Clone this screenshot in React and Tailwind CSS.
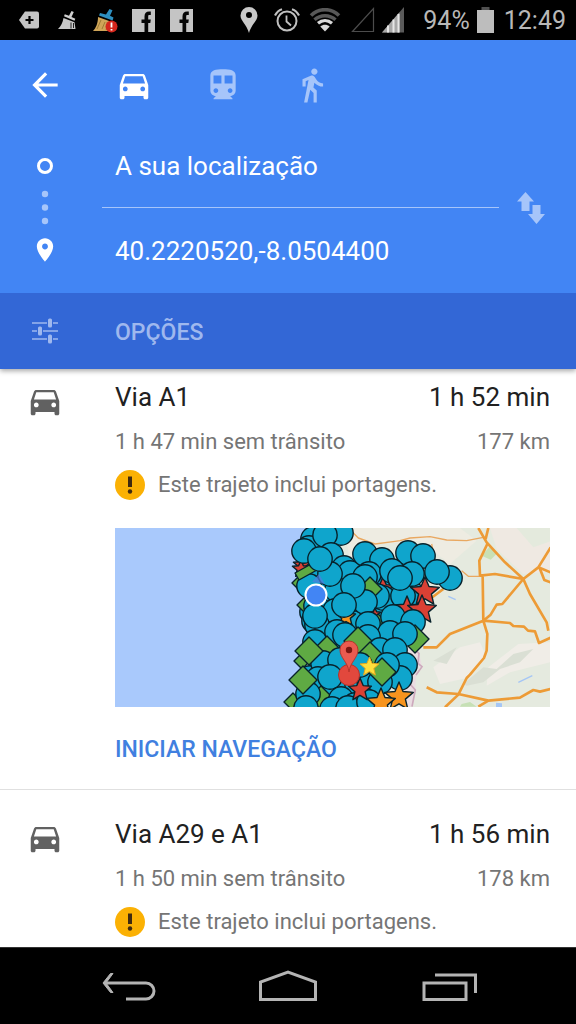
import React from "react";

const CAR =
  "M18.92 6.01C18.72 5.42 18.16 5 17.5 5h-11c-.66 0-1.21.42-1.42 1.01L3 12v8c0 .55.45 1 1 1h1c.55 0 1-.45 1-1v-1h12v1c0 .55.45 1 1 1h1c.55 0 1-.45 1-1v-8l-2.08-5.99zM6.5 16c-.83 0-1.5-.67-1.5-1.5S5.67 13 6.5 13s1.5.67 1.5 1.5S7.33 16 6.5 16zm11 0c-.83 0-1.5-.67-1.5-1.5s.67-1.5 1.5-1.5 1.5.67 1.5 1.5-.67 1.5-1.5 1.5zM5 11l1.5-4.5h11L19 11H5z";
const BACK = "M20 11H7.83l5.59-5.59L12 4l-8 8 8 8 1.41-1.41L7.83 13H20v-2z";
const TRAIN =
  "M12 2c-4.42 0-8 .5-8 4v9.5C4 17.43 5.57 19 7.5 19L6 20.5v.5h12v-.5L16.5 19c1.93 0 3.5-1.57 3.5-3.5V6c0-3.5-3.58-4-8-4zM7.5 17c-.83 0-1.5-.67-1.5-1.5S6.67 14 7.5 14s1.5.67 1.5 1.5S8.33 17 7.5 17zm3.5-6H6V6h5v5zm5.5 6c-.83 0-1.5-.67-1.5-1.5s.67-1.5 1.5-1.5 1.5.67 1.5 1.5-.67 1.5-1.5 1.5zm1.5-6h-5V6h5v5z";
const WALK =
  "M13.5 5.5c1.1 0 2-.9 2-2s-.9-2-2-2-2 .9-2 2 .9 2 2 2zM9.8 8.9L7 23h2.1l1.8-8 2.1 2v6h2v-7.5l-2.1-2 .6-3C14.8 12 16.8 13 19 13v-2c-1.9 0-3.5-1-4.3-2.4l-1-1.6c-.4-.6-1-1-1.7-1-.3 0-.5.1-.8.1L6 8.3V13h2V9.6l1.8-.7";
const PLACE =
  "M12 2C8.13 2 5 5.13 5 9c0 5.25 7 13 7 13s7-7.75 7-13c0-3.87-3.13-7-7-7zm0 9.5c-1.38 0-2.5-1.12-2.5-2.5s1.12-2.5 2.5-2.5 2.5 1.12 2.5 2.5-1.12 2.5-2.5 2.5z";

function Icon({ d, className = "size-[38px]" }) {
  return (
    <svg viewBox="0 0 24 24" className={className} fill="currentColor" aria-hidden="true">
      <path d={d} />
    </svg>
  );
}

function Cell({ children }) {
  return <span className="flex w-[38px] shrink-0 justify-center">{children}</span>;
}

function FacebookIcon() {
  return (
    <svg viewBox="0 0 23 23" className="size-[23px]" aria-hidden="true">
      <rect width="23" height="23" fill="#c4c4c4" />
      <path d="M12.500 23v-9H9.500v-3.600h3V7.600c0-3.300 1.700-5 4.600-5h1.700v3.500h-1.300c-1 0-1.300.4-1.300 1.400v2.900h2.600l-.5 3.600h-2.100v9z" fill="#050505" />
    </svg>
  );
}

function StatusBar() {
  return (
    <div className="flex h-10 items-center justify-between bg-black pl-[10px] pr-[10px] text-[#b8b8b8]">
      <div className="flex items-center">
        <Cell>
          <svg viewBox="0 0 20 18" className="h-[18px] w-5" aria-hidden="true">
            <path d="M6 .5h12a2 2 0 0 1 2 2v13a2 2 0 0 1-2 2H6L0 9z" fill="#c4c4c4" />
            <path d="M10.500 5v8M6.500 9h8" stroke="#000" strokeWidth="2.200" />
          </svg>
        </Cell>
        <Cell>
          <svg viewBox="0 0 20 20" className="size-5" aria-hidden="true">
            <path d="M14.500 1l2.300 1-2.300 5 3.800 1.800-.8 2L7 6.300l.8-2 4.200 1.500z" fill="#d0d0d0" />
            <path d="M6.500 8l11 4.300 1 6.700H1c3-3 4.500-6 5.500-11z" fill="#c8c8c8" />
            <path d="M14 12.500v6M16.500 13v5" stroke="#222" strokeWidth="1" />
          </svg>
        </Cell>
        <Cell>
          <svg viewBox="0 0 26 25" className="h-[25px] w-[26px]" aria-hidden="true">
            <path d="M6 9l14 5-1 9H1c3-3 5-8 5-14z" fill="#cfa558" />
            <path d="M9 12L5 21M13 14l-3 7M17 15l-3 7" stroke="#9d7a35" />
            <path d="M17.500 1l3 1.300-2.500 5.500 3.500 1.700-.9 3L7 7.500l1-2.500 6 1.500z" fill="#2d8fc0" />
            <circle cx="19.500" cy="18.500" r="6" fill="#d5261c" />
            <path d="M19.500 14.500v5M19.500 21v1.500" stroke="#fff" strokeWidth="1.800" />
          </svg>
        </Cell>
        <Cell>
          <FacebookIcon />
        </Cell>
        <Cell>
          <FacebookIcon />
        </Cell>
      </div>
      <div className="flex items-center">
        <Cell>
          <svg viewBox="0 0 18 26" className="h-[26px] w-[18px]" aria-hidden="true">
            <path fillRule="evenodd" d="M9 0a8.500 8.500 0 0 0-8.500 8.500C.5 14 6.500 17 9 26c2.500-9 8.500-12 8.500-17.500A8.500 8.500 0 0 0 9 0zm0 5a3 3 0 1 1 0 6 3 3 0 0 1 0-6z" fill="#c8c8c8" />
          </svg>
        </Cell>
        <Cell>
          <svg viewBox="0 0 26 24" className="h-6 w-[26px]" fill="none" stroke="#c0c0c0" aria-hidden="true">
            <circle cx="13" cy="13" r="9.500" strokeWidth="2" />
            <path d="M12.500 7.500v6l4.500 4" strokeWidth="1.800" />
            <path d="M1 7.500C2.500 4.500 4.500 2.300 8 1.200M25 7.500C23.500 4.500 21.500 2.300 18 1.200" strokeWidth="2.200" />
          </svg>
        </Cell>
        <Cell>
          <svg viewBox="0 0 32 24" className="h-6 w-8" fill="none" aria-hidden="true">
            <path d="M2 7.500C10-.3 22-.3 30 7.500" stroke="#585858" strokeWidth="3.600" />
            <path d="M5.500 11.800c6-5.500 15-5.500 21 0" stroke="#585858" strokeWidth="3.400" />
            <path d="M9 15.300c4.200-3.600 9.800-3.600 14 0" stroke="#d8d8d8" strokeWidth="3.200" />
            <path d="M16 23.500l-4.700-5c2.800-2.200 6.600-2.200 9.400 0z" fill="#d8d8d8" />
          </svg>
        </Cell>
        <Cell>
          <svg viewBox="0 0 24 26" className="h-[26px] w-6" fill="none" aria-hidden="true">
            <path d="M22.500 1.500v23H1.500z" stroke="#4c4c4c" strokeWidth="1.200" />
          </svg>
        </Cell>
        <svg viewBox="0 0 23 26" className="h-[26px] w-[23px]" aria-hidden="true">
          <path d="M22 0v25.500H0z" fill="#5a5a5a" />
          <path d="M17.500 5.200v20.300H0z" fill="#a8a8a8" />
          <path d="M6 18.500v7M11.500 12.500v13M16.500 7v18.500" stroke="#e6e6e6" strokeWidth="2" />
        </svg>
        <span className="ml-[18px] pt-[2px] text-[25px] leading-[30px]">94%</span>
        <svg viewBox="0 0 17 26" className="ml-[7px] h-[26px] w-[17px]" aria-hidden="true">
          <path d="M4.500 0h8v3h-8z" fill="#505050" />
          <path d="M0 3h17v23H0z" fill="#bdbdbd" />
        </svg>
        <span className="ml-[10px] pt-[2px] text-[25px] leading-[30px]">12:49</span>
      </div>
    </div>
  );
}

/* Markers are listed in painting order: [kind, x, y, radius]. */
const MARKERS = [
  ["c", 199, 40], ["c", 198, 50], ["c", 197, 84], ["c", 205, 60], ["c", 213, 72], ["c", 212, 93], ["c", 215, 105],
  ["c", 240, 85], ["c", 238, 95], ["c", 262, 52], ["c", 270, 60], ["c", 275, 75], ["c", 262, 85], ["c", 215, 118],
  ["c", 205, 128], ["c", 235, 125], ["c", 260, 118], ["c", 256, 130], ["c", 230, 140], ["c", 243, 150], ["c", 270, 125],
  ["c", 195, 150], ["c", 205, 165], ["c", 200, 177], ["c", 245, 170], ["c", 208, 180], ["c", 255, 152], ["c", 232, 162],
  ["r", 187, 37, 9], ["g", 187, 55, 10], ["r", 186, 41, 9], ["g", 219, 38, 10], ["g", 189, 77, 7], ["o", 214, 86, 10],
  ["c", 226, 5], ["c", 198, 11], ["c", 194, 20], ["c", 189, 23], ["c", 210, 7], ["c", 216, 27],
  ["c", 229, 40], ["c", 235, 45], ["c", 222, 62], ["c", 194, 58], ["c", 215, 46], ["b", 191, 43], ["c", 205, 31],
  ["c", 250, 26], ["c", 267, 32], ["c", 302, 30], ["c", 293, 25], ["c", 308, 28],
  ["c", 254, 46], ["c", 250, 49], ["r", 268, 61, 12], ["c", 268, 70], ["c", 262, 68], ["g", 255, 61, 12],
  ["c", 297, 66], ["c", 288, 68], ["c", 277, 43], ["c", 297, 46], ["c", 285, 50],
  ["c", 335, 50], ["c", 322, 44], ["r", 292, 81, 13], ["r", 310, 64, 15], ["r", 307, 82, 15],
  ["c", 199, 93], ["c", 201, 78], ["c", 220, 83], ["c", 250, 74], ["c", 238, 58], ["o", 231, 89, 10],
  ["c", 229, 77], ["r", 260, 86, 6], ["g", 263, 93, 7], ["c", 253, 96], ["c", 202, 97], ["c", 200, 88],
  ["c", 200, 114], ["c", 222, 104], ["c", 230, 107],
  ["c", 278, 89], ["c", 298, 94], ["c", 275, 105], ["g", 300, 111, 14], ["c", 290, 106],
  ["c", 253, 109], ["c", 265, 122], ["c", 280, 122], ["o", 213, 132, 8], ["g", 212, 121, 13],
  ["c", 208, 135], ["c", 225, 132], ["g", 243, 113, 14], ["g", 255, 127, 13], ["c", 245, 137], ["c", 290, 137], ["c", 285, 150], ["c", 272, 137],
  ["c", 203, 151], ["c", 218, 160], ["c", 215, 149],
  ["g", 187, 133, 8], ["g", 194, 123, 14], ["g", 178, 174, 9], ["g", 206, 170, 12],
  ["c", 193, 166], ["g", 188, 152, 14], ["c", 191, 180], ["c", 226, 171], ["c", 217, 181], ["c", 240, 177], ["c", 233, 180],
  ["c", 265, 154], ["c", 254, 174], ["g", 267, 144, 14], ["r", 245, 162, 12], ["o", 284, 169, 15], ["o", 266, 175, 15],
];

const MARKER_FILL = { r: "#da4034", o: "#f7941e", g: "#5faa43" };

function starPoints(x, y, radius) {
  return Array.from({ length: 10 }, (_, i) => {
    const r = i % 2 ? radius * 0.45 : radius;
    const a = (i * Math.PI) / 5 - Math.PI / 2;
    return `${(x + r * Math.cos(a)).toFixed(1)},${(y + r * Math.sin(a)).toFixed(1)}`;
  }).join(" ");
}

function Marker({ kind, x, y, r }) {
  if (kind === "c") return <circle cx={x} cy={y} r="12.200" fill="#0fa5cc" />;
  if (kind === "b")
    return <path d={`M${x - 11} ${y + 2}L${x + 7} ${y - 8}L${x + 11} ${y - 1}L${x - 7} ${y + 9}z`} fill={MARKER_FILL.g} />;
  if (kind === "g")
    return <path d={`M${x} ${y - r}L${x + r} ${y}L${x} ${y + r}L${x - r} ${y}z`} fill={MARKER_FILL.g} />;
  return <polygon points={starPoints(x, y, r)} fill={MARKER_FILL[kind]} />;
}

function RouteMap() {
  return (
    <svg viewBox="0 0 435 179" className="block w-full" role="img" aria-label="Mapa do trajeto">
      <rect width="435" height="179" fill="#a9c9fc" />
      <path d="M205 0h230v179H185l10-60-5-60z" fill="#e5eadf" />
      <g transform="translate(285 -4) scale(.3333)">
        <path d="M-170 0L180 12 230 50 150 120 60 50-60 60-150 110z" fill="#eeece2" />
        <path d="M270 12h182v130L370 150 290 75z" fill="#efe9e2" />
        <path d="M350 12h102v40L400 70z" fill="#e4eadd" />
        <path d="M100 430l80-60 60-15 20 45-50 60-90 20zM265 430l90-70 95-5v60l-120 30-70 40z" fill="#f0ede7" />
        <path d="M190 480l60-50 40 5 50-45 60-15-40 40-60 20-50 40-50 10zM100 410l70-40-30 50z" fill="#dadfd4" />
        <path d="M245 95l25-28 20 22-18 18z" fill="#c9e0b4" />
        <path d="M185 540l25-6 20 14h-50z" fill="#c6e0b5" />
        <path d="M145 217l22 10M355 475l42-20" stroke="#a5c6f5" strokeWidth="4" />
        <path d="M288 536l18 2v12h-18z" fill="#a5c6f5" />
        <path d="M20 370l35 10 10 40-15 20 -5 60-10 48H0z" fill="#eadde2" />
        <path d="M35 370l22 18-3 30 12 10-18 25M30 480l16 18-10 50" fill="none" stroke="#cda9bd" strokeWidth="5" />
        <g fill="none" stroke="#e9a861" strokeWidth="4" strokeLinejoin="round">
          <path d="M-155 12l30 30 50 18 60-8L0 50l30-8 60-4 50 10 60 2 50-10M185 140l20 17h33M95 60l8 40" />
          <path d="M-190 12l-3 12" strokeWidth="7" />
        </g>
        <g fill="none" stroke="#ed9b36" strokeWidth="8" strokeLinejoin="round">
          <path d="M235 12l25 43 55 60 55 50 20 45 50 85 5 25M265 12l-8 33M262 60l-24 50 2 45 45-5 85 15M248 155l2 135M250 290l22-18 18-30 17-2 63-75 45-35 37-60M415 130l37 15M418 130l15 38 19 7" />
          <path d="M250 290l-100 40-40 40H70M250 290l80 7 10 9 32 2 12 12 21 2 12 35 35-16M250 290l12 40-2 50-8 22-42 50-10 10-25 50-40 38" />
          <path d="M80 490l30 15 65 5 90 20 95-9 40-23 20 5 32-8M265 530l-30 18M90 225l40-30" />
        </g>
      </g>
      <g stroke="#08222b" strokeWidth="1.400" strokeLinejoin="round">
        {MARKERS.map(([kind, x, y, r], i) => (
          <Marker key={i} kind={kind} x={x} y={y} r={r} />
        ))}
      </g>
      <path d="M197 54l7-8 6 10z" fill="#4f7fe0" opacity=".7" />
      <circle cx="201" cy="67" r="10.500" fill="#4285f4" stroke="#fff" strokeWidth="2" />
      <polygon points={starPoints(254.5, 139, 10)} fill="#ffdf3d" stroke="#e8a71c" strokeWidth="1" />
      <circle cx="234" cy="147" r="10.500" fill="#e2483d" stroke="#b93127" />
      <path d="M234 144c-1-10-9-14-9-22a9 9 0 0 1 18 0c0 8-8 12-9 22z" fill="#ea5b50" stroke="#b8352b" />
      <circle cx="234" cy="122" r="3.200" fill="#7c1712" />
    </svg>
  );
}

function Route({ className, name, time, detail, distance, children }) {
  return (
    <article className={`flex items-start pr-[26px] ${className}`}>
      <div className="ml-[26px] mr-[51px] mt-[2px] shrink-0 text-[#616161]">
        <Icon d={CAR} />
      </div>
      <div className="min-w-0 flex-1">
        <h2 className="flex justify-between text-[26px] leading-[34px] text-[#212121]">
          <span>{name}</span>
          <span>{time}</span>
        </h2>
        <p className="mt-[11px] flex justify-between text-[22px] leading-[34px] text-[#757575]">
          <span>{detail}</span>
          <span>{distance}</span>
        </p>
        <p className="mt-[9px] flex items-center gap-[13px] text-[22px] leading-[34px] text-[#757575]">
          <svg viewBox="0 0 30 30" className="size-[30px] shrink-0" aria-hidden="true">
            <circle cx="15" cy="15" r="15" fill="#fbb104" />
            <path d="M13 6.500h4V17h-4z" fill="#3f2a10" />
            <circle cx="15" cy="21.500" r="2.200" fill="#3f2a10" />
          </svg>
          <span>Este trajeto inclui portagens.</span>
        </p>
        {children}
      </div>
    </article>
  );
}

export default function App() {
  return (
    <div className="flex min-h-screen flex-col bg-white font-[Roboto,sans-serif]">
      <StatusBar />
      <header className="relative bg-[#4285f4] text-white shadow-[0_2px_5px_rgba(0,0,0,0.35)]">
        <nav className="flex gap-[51px] pb-[21px] pl-[26px] pt-[26px]">
          <button aria-label="Voltar"><Icon d={BACK} /></button>
          <button aria-label="Carro"><Icon d={CAR} /></button>
          <button aria-label="Transportes públicos" className="text-[#a6c5fa]"><Icon d={TRAIN} /></button>
          <button aria-label="A pé" className="text-[#a6c5fa]"><Icon d={WALK} /></button>
        </nav>
        <div className="flex">
          <div className="flex w-[90px] shrink-0 flex-col items-center pt-[33px]">
            <svg viewBox="0 0 16 16" className="size-4" aria-hidden="true">
              <circle cx="8" cy="8" r="6.500" fill="none" stroke="currentColor" strokeWidth="3" />
            </svg>
            <svg viewBox="0 0 8 36" className="mt-4 h-9 w-2" fill="#a6c5fa" aria-hidden="true">
              <circle cx="4" cy="4" r="3.200" />
              <circle cx="4" cy="17.500" r="3.200" />
              <circle cx="4" cy="31" r="3.200" />
            </svg>
            <Icon d={PLACE} className="mt-[10px] size-7" />
          </div>
          <div className="ml-3 flex-1">
            <input aria-label="Ponto de partida" defaultValue="A sua localização" className="block h-[83px] w-full border-b border-[#a6c5fa] bg-transparent px-[13px] text-[26px] outline-none" />
            <input aria-label="Destino" defaultValue="40.2220520,-8.0504400" className="block h-[85px] w-full bg-transparent px-[13px] text-[26px] outline-none" />
          </div>
          <button aria-label="Trocar partida e destino" className="flex w-[77px] items-center justify-center pb-[2px] pr-[13px]">
            <svg viewBox="0 0 28 32" className="h-8 w-7" fill="#a6c5fa" aria-hidden="true">
              <path d="M8.500 0l8.500 9.500h-4.500V19h-8V9.500H0zM15.500 13h8v9H28L19.500 32 11 22h4.500z" />
            </svg>
          </button>
        </div>
        <button className="flex h-[76px] w-full items-center bg-[#3367d6] text-left text-[23px] font-medium text-[#9fb8ee]">
          <span className="flex w-[90px] justify-center">
            <svg viewBox="0 0 26 26" className="size-[26px]" aria-hidden="true">
              <path d="M0 5h15M21 5h5M0 13h5M11 13h15M0 21h15M21 21h5" stroke="currentColor" strokeWidth="1.600" />
              <rect x="16" y=".5" width="4" height="9" rx="1.500" fill="currentColor" />
              <rect x="6" y="8.500" width="4" height="9" rx="1.500" fill="currentColor" />
              <rect x="16" y="16.500" width="4" height="9" rx="1.500" fill="currentColor" />
            </svg>
          </span>
          <span className="pl-[25px] pt-1">OPÇÕES</span>
        </button>
      </header>
      <main className="flex-1">
        <Route className="border-b border-[#e0e0e0] pb-[22px] pt-[11px]" name="Via A1" time="1 h 52 min" detail="1 h 47 min sem trânsito" distance="177 km">
          <div className="mt-[26px]">
            <RouteMap />
          </div>
          <button className="mt-[26px] block text-[23px] font-medium leading-[34px] text-[#4080e0]">INICIAR NAVEGAÇÃO</button>
        </Route>
        <Route className="pb-2 pt-[27px]" name="Via A29 e A1" time="1 h 56 min" detail="1 h 50 min sem trânsito" distance="178 km" />
      </main>
      <footer className="flex h-[77px] items-center justify-center gap-[100px] border-t border-[#333] bg-black text-[#b4b4b4]">
        <button aria-label="Retroceder">
          <svg viewBox="0 0 60 34" className="h-[34px] w-[60px]" fill="none" stroke="currentColor" strokeWidth="3" aria-hidden="true">
            <path d="M6 14h42a8 8 0 0 1 0 16H28" />
            <path d="M12.500 4.500h2.500L8 14l7 9.500h-2.500L5 14z" fill="currentColor" strokeWidth="1" />
          </svg>
        </button>
        <button aria-label="Início">
          <svg viewBox="0 0 60 34" className="h-[34px] w-[60px]" fill="none" stroke="currentColor" strokeWidth="3" aria-hidden="true">
            <path d="M2.500 30.500V13L30 3l27.500 10v17.500z" />
          </svg>
        </button>
        <button aria-label="Aplicações recentes">
          <svg viewBox="0 0 60 34" className="h-[34px] w-[60px]" fill="none" stroke="currentColor" strokeWidth="3" aria-hidden="true">
            <path d="M6 14h42v16.500H6zM17 6h40.500v18" />
          </svg>
        </button>
      </footer>
    </div>
  );
}
